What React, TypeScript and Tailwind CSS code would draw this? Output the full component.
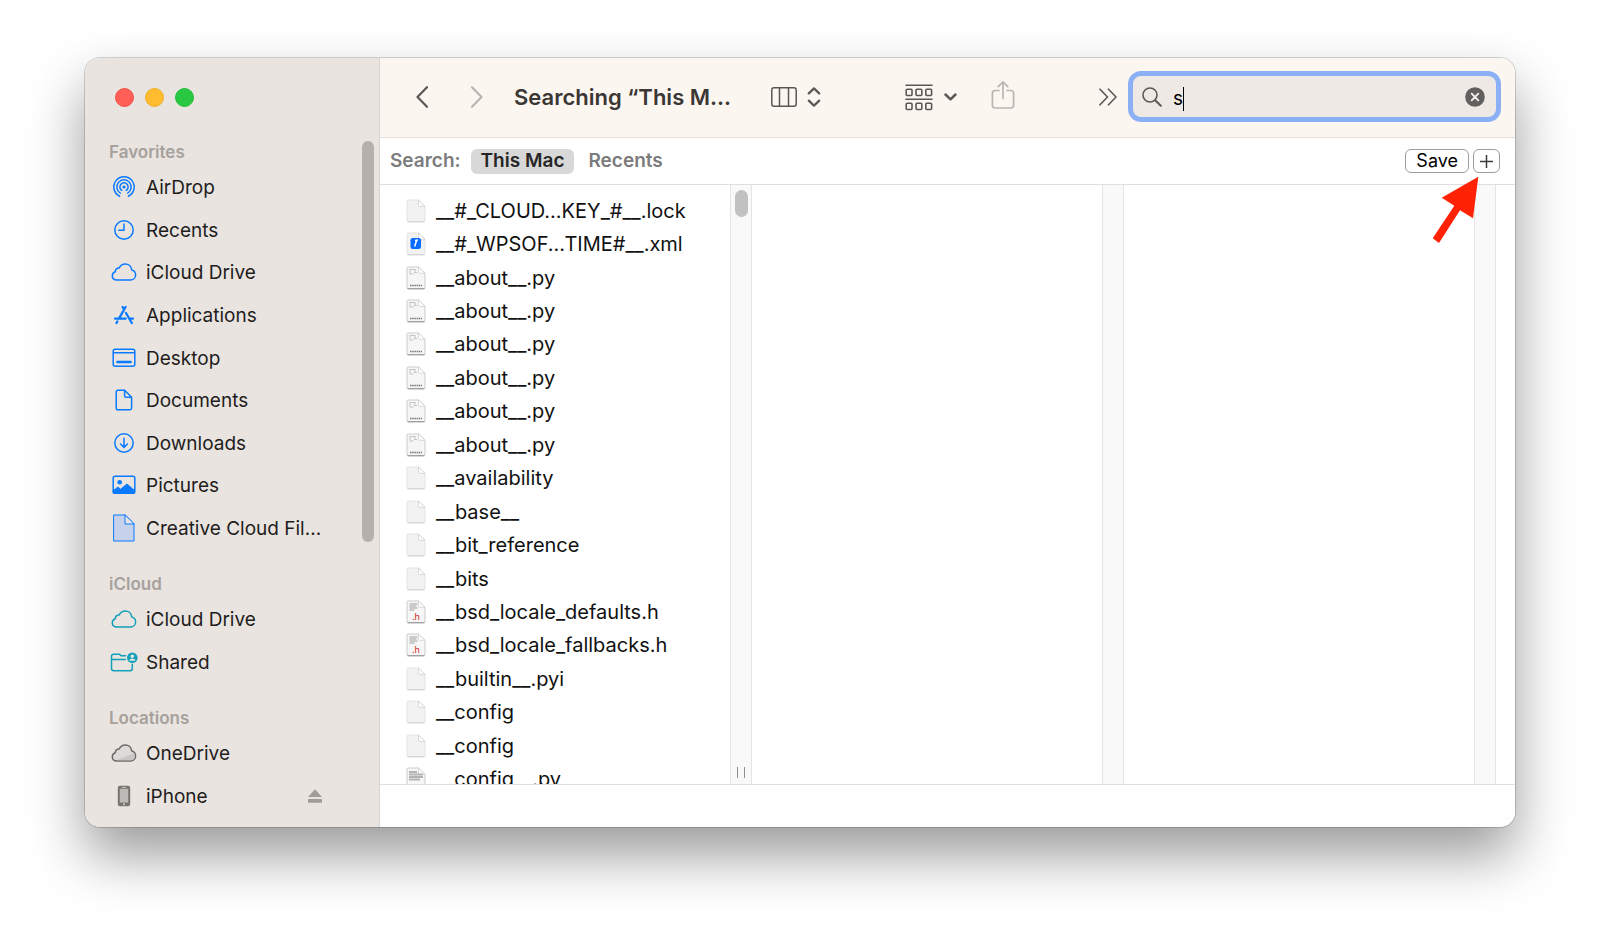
import { useState } from "react";
import type { ReactNode } from "react";

const strokeProps = {
  fill: "none",
  stroke: "currentColor",
  strokeLinecap: "round" as const,
  strokeLinejoin: "round" as const,
};

const AirDropIcon = () => (
  <svg width="24" height="24" viewBox="0 0 24 24" strokeWidth="1.5" {...strokeProps}>
    <circle cx="12" cy="12" r="1.6" fill="currentColor" stroke="none" />
    <path d="M9.8 15.4a4.1 4.1 0 1 1 4.4 0" />
    <path d="M8.3 18.2a7.2 7.2 0 1 1 7.4 0" />
    <path d="M7.6 21.2a10.2 10.2 0 1 1 8.8 0" />
  </svg>
);

const RecentsIcon = () => (
  <svg width="22" height="22" viewBox="0 0 22 22" strokeWidth="1.5" {...strokeProps}>
    <circle cx="11" cy="11" r="9.2" />
    <path d="M11 5v6.3H5.8" />
  </svg>
);

const CloudIcon = ({ filled = false }: { filled?: boolean }) => (
  <svg width="26" height="20" viewBox="0 0 26 20" strokeWidth="1.5" {...strokeProps}>
    <path
      d="M6.2 18C3.2 18 1.3 16.2 1.3 13.7c0-2.1 1.2-3.5 3-4C4.2 7.4 6 5.700 8.200 6 9.300 3.500 11.500 1.900 14.200 1.900c3.500 0 6.200 2.500 6.500 6C23 8.600 24.600 10.500 24.600 12.900c0 3-2.200 5.100-5 5.100Z"
      fill={filled ? "#dedad7" : "none"}
    />
    {filled && <path d="M5.500 17.200 22 10.400c1 .6 1.700 1.700 1.600 2.900-.1 2.400-1.700 3.900-4 3.900Z" fill="#c9c6c4" stroke="none" />}
  </svg>
);

const ApplicationsIcon = () => (
  <svg width="22" height="20" viewBox="0 0 22 20" strokeWidth="2.3" {...strokeProps}>
    <path d="M12.600 2 6.300 12.800M9.600 2l1.500 2.600M13 8l5.800 10M2 13.600h10.700M16.800 13.600H20M4.400 16.400 3.500 18" />
  </svg>
);

const DesktopIcon = () => (
  <svg width="24" height="20" viewBox="0 0 24 20" strokeWidth="1.5" {...strokeProps}>
    <rect x="1.2" y="1.2" width="21.6" height="17" rx="2" />
    <path d="M1.500 4.700h21" />
    <path d="M5.500 14h13" strokeWidth="2.6" />
  </svg>
);

const DocumentIcon = () => (
  <svg width="18" height="22" viewBox="0 0 18 22" strokeWidth="1.5" {...strokeProps}>
    <path d="M3 1.200h6.600l7 7V19a1.800 1.800 0 0 1-1.800 1.800H3A1.800 1.800 0 0 1 1.200 19V3A1.800 1.800 0 0 1 3 1.200Z" />
    <path d="M9.600 1.400v5.300c0 1 .5 1.500 1.500 1.500h5.300" />
  </svg>
);

const DownloadsIcon = () => (
  <svg width="22" height="22" viewBox="0 0 22 22" strokeWidth="1.5" {...strokeProps}>
    <circle cx="11" cy="11" r="9.2" />
    <path d="M11 6.200v9M7.600 12l3.400 3.400 3.400-3.400" />
  </svg>
);

const PicturesIcon = () => (
  <svg width="24" height="20" viewBox="0 0 24 20" strokeWidth="1.5" {...strokeProps}>
    <rect x="1.2" y="1.2" width="21.6" height="17" rx="1.8" />
    <circle cx="7.7" cy="7.3" r="2.3" fill="currentColor" stroke="none" />
    <path d="M1.500 15.500 6 12l2.500 2.300L15 9l7.500 6.500v2.500h-21Z" fill="currentColor" strokeWidth="1" />
  </svg>
);

const CreativeCloudIcon = () => (
  <svg width="22" height="28" viewBox="0 0 22 28" strokeWidth="1" {...strokeProps}>
    <path d="M1 1h11l9 9v17H1Z" fill="#c6d2ec" />
    <path d="M12 1v9h9Z" fill="#e9e4e0" />
  </svg>
);

const SharedIcon = () => (
  <svg width="28" height="20" viewBox="0 0 28 20" strokeWidth="1.5" {...strokeProps}>
    <path d="M15.500 3.800H11L9.500 2.200H3.800c-1.500 0-2.300.7-2.300 2.200v12.200c0 1.400.8 2.200 2.200 2.200h16.400c1.400 0 2.200-.8 2.200-2.200V12.200M1.800 7.600h13.500" />
    <circle cx="22.3" cy="5.7" r="5.3" fill="currentColor" stroke="none" />
    <circle cx="22.3" cy="4.2" r="1.7" fill="#e9e4e0" stroke="none" />
    <path d="M19.200 8.700c.4-3 5.800-3 6.200 0Z" fill="#e9e4e0" stroke="none" />
  </svg>
);

const PhoneIcon = () => (
  <svg width="14" height="22" viewBox="0 0 14 22">
    <rect x="0.8" y="0.8" width="12.4" height="20.4" rx="2.2" fill="#777371" />
    <rect x="2.8" y="3.8" width="8.4" height="13.8" fill="#bdb9b6" />
    <rect x="4.8" y="2" width="4.4" height="0.9" fill="#c9c5c2" />
    <circle cx="7" cy="19.3" r="1" fill="#d5d1ce" />
  </svg>
);

type Place = { label: string; icon: ReactNode; ejectable?: boolean };
type PlaceGroup = { heading: string; tint: string; height: string; places: Place[] };

const groups: PlaceGroup[] = [
  {
    heading: "Favorites",
    tint: "text-[#0a7aff]",
    height: "h-[383px]",
    places: [
      { label: "AirDrop", icon: <AirDropIcon /> },
      { label: "Recents", icon: <RecentsIcon /> },
      { label: "iCloud Drive", icon: <CloudIcon /> },
      { label: "Applications", icon: <ApplicationsIcon /> },
      { label: "Desktop", icon: <DesktopIcon /> },
      { label: "Documents", icon: <DocumentIcon /> },
      { label: "Downloads", icon: <DownloadsIcon /> },
      { label: "Pictures", icon: <PicturesIcon /> },
      { label: "Creative Cloud Fil...", icon: <CreativeCloudIcon /> },
    ],
  },
  {
    heading: "iCloud",
    tint: "text-[#12a0b8]",
    height: "h-[85px]",
    places: [
      { label: "iCloud Drive", icon: <CloudIcon /> },
      { label: "Shared", icon: <SharedIcon /> },
    ],
  },
  {
    heading: "Locations",
    tint: "text-[#6d6a69]",
    height: "h-[85px]",
    places: [
      { label: "OneDrive", icon: <CloudIcon filled /> },
      { label: "iPhone", icon: <PhoneIcon />, ejectable: true },
    ],
  },
];

type FileKind = "blank" | "xml" | "py" | "h" | "text";

const files: { name: string; kind: FileKind }[] = [
  { name: "__#_CLOUD...KEY_#__.lock", kind: "blank" },
  { name: "__#_WPSOF...TIME#__.xml", kind: "xml" },
  { name: "__about__.py", kind: "py" },
  { name: "__about__.py", kind: "py" },
  { name: "__about__.py", kind: "py" },
  { name: "__about__.py", kind: "py" },
  { name: "__about__.py", kind: "py" },
  { name: "__about__.py", kind: "py" },
  { name: "__availability", kind: "blank" },
  { name: "__base__", kind: "blank" },
  { name: "__bit_reference", kind: "blank" },
  { name: "__bits", kind: "blank" },
  { name: "__bsd_locale_defaults.h", kind: "h" },
  { name: "__bsd_locale_fallbacks.h", kind: "h" },
  { name: "__builtin__.pyi", kind: "blank" },
  { name: "__config", kind: "blank" },
  { name: "__config", kind: "blank" },
  { name: "__config__.py", kind: "text" },
];

const FileIcon = ({ kind }: { kind: FileKind }) => {
  const plain = kind === "blank" || kind === "xml";
  return (
    <svg width="20" height="24" viewBox="0 0 20 24" className="shrink-0" aria-hidden="true">
      <path d="M2 1h10.500L19 7.300V21.700a1 1 0 0 1-1 1H2a1 1 0 0 1-1-1V2a1 1 0 0 1 1-1Z" fill={plain ? "#f2f2f2" : "#f6f6f6"} stroke={plain ? "#e4e4e4" : "#cccccc"} />
      <path d="M1.500 22.800h17" stroke={plain ? "#d0d0d0" : "#8f8f8f"} />
      <path d="M12.500 1v5.300a1 1 0 0 0 1 1H19Z" fill="#ffffff" stroke="#cfcfcf" strokeWidth="0.8" />
      {kind === "xml" && (
        <>
          <rect x="4.500" y="6" width="10.500" height="11" rx="2.200" fill="#0a6cff" />
          <path d="M10.800 8 8.600 14.600M9 8.600l3-.5" stroke="#ffffff" strokeWidth="1.500" fill="none" />
        </>
      )}
      {kind === "py" && (
        <>
          <path d="M3.500 3.500h6M4 3.500v4M9 3.500v3M3.500 8h4M8 6.500h3" stroke="#c4c4c4" />
          <path d="M4 19.500h12" stroke="#777777" strokeWidth="1.600" strokeDasharray="1.500 0.700" />
        </>
      )}
      {kind === "h" && (
        <>
          <path d="M3.500 4h8M3.500 6h7M3.500 8h8M3.500 10h5" stroke="#bdbdbd" strokeWidth="1.300" />
          <text x="6" y="20" fontSize="9" fill="#cf1f1f" fontFamily="Inter, sans-serif">.h</text>
        </>
      )}
      {kind === "text" && <path d="M3 5h8M3 7.500h14M3 10h14M3 12.500h11" stroke="#b3b3b3" strokeWidth="1.900" />}
    </svg>
  );
};

const Sidebar = () => (
  <aside className="relative w-[295px] shrink-0 border-r border-[#d9d4d0] bg-[#e9e4e0]">
    <div className="flex gap-[11px] pt-[30px] pl-[30px]">
      <button type="button" aria-label="Close" className="size-[19px] rounded-full border border-[#f04e43] bg-[#ff5f57]" />
      <button type="button" aria-label="Minimize" className="size-[19px] rounded-full border border-[#f3ae2a] bg-[#febc2e]" />
      <button type="button" aria-label="Zoom" className="size-[19px] rounded-full border border-[#23bd39] bg-[#28c840]" />
    </div>
    <nav aria-label="Places" className="mt-[31px] flex flex-col gap-[21px] pr-[56px] pl-6">
      {groups.map((g) => (
        <section key={g.heading}>
          <h2 className="flex h-7 items-center text-[17px] leading-6 font-semibold text-[#a6a19d]">{g.heading}</h2>
          <ul className={`flex flex-col ${g.height}`}>
            {g.places.map((p) => (
              <li key={p.label} className="flex flex-1 items-center">
                <a href="#" className="flex items-center gap-[7px] text-[19px] leading-6 whitespace-nowrap text-[#1f1d1c]">
                  <span className={`flex w-[30px] justify-center ${g.tint}`}>{p.icon}</span>
                  <span className="pt-0.5">{p.label}</span>
                </a>
                {p.ejectable && (
                  <button type="button" aria-label={`Eject ${p.label}`} className="ml-auto text-[#a19c98]">
                    <svg width="16" height="16" viewBox="0 0 16 16" fill="currentColor">
                      <path d="M8 1.200 15 9H1Z" />
                      <rect x="1" y="11" width="14" height="3.8" rx="0.6" />
                    </svg>
                  </button>
                )}
              </li>
            ))}
          </ul>
        </section>
      ))}
    </nav>
    <div className="absolute top-[83px] right-[5px] h-[401px] w-3 rounded-full bg-[#b5b0ac]" />
  </aside>
);

const Toolbar = () => {
  const [query, setQuery] = useState("s");

  return (
    <header className="flex h-20 shrink-0 items-center border-b border-[#e3deda] bg-[#fcf6f0] pr-[14px] pb-0.5 pl-9 text-[#5a5755]">
      <button type="button" aria-label="Back">
        <svg width="12" height="22" viewBox="0 0 12 22" strokeWidth="2.2" {...strokeProps}>
          <path d="M11 1.200 1.500 11 11 20.800" />
        </svg>
      </button>
      <button type="button" aria-label="Forward" className="ml-[43px] text-[#b9b5b1]">
        <svg width="12" height="22" viewBox="0 0 12 22" strokeWidth="2.2" {...strokeProps}>
          <path d="m1 1.200 9.500 9.800L1 20.800" />
        </svg>
      </button>
      <h1 className="ml-[31px] text-[22px] leading-8 font-semibold whitespace-nowrap text-[#3a3735]">Searching “This M...</h1>
      <button type="button" aria-label="View as columns" className="ml-auto flex items-center gap-[10px]">
        <svg width="26" height="20" viewBox="0 0 26 20" strokeWidth="1.5" {...strokeProps}>
          <rect x="0.8" y="0.8" width="24.4" height="18.4" rx="2.2" />
          <path d="M8.500 1v18M17.500 1v18" />
        </svg>
        <svg width="14" height="20" viewBox="0 0 14 20" strokeWidth="2.2" {...strokeProps}>
          <path d="m1.800 6.400 5.200-5 5.200 5M1.800 13.600l5.200 5 5.200-5" />
        </svg>
      </button>
      <button type="button" aria-label="Group items" className="ml-[84px] flex items-center gap-[11px]">
        <svg width="28" height="28" viewBox="0 0 28 28" strokeWidth="1.6" {...strokeProps}>
          <path d="M1 2.200h26M1 16.200h26" />
          <rect x="1.2" y="6.3" width="5.8" height="6.2" rx="1" />
          <rect x="11" y="6.3" width="5.8" height="6.2" rx="1" />
          <rect x="20.8" y="6.3" width="5.8" height="6.2" rx="1" />
          <rect x="1.2" y="20.3" width="5.8" height="6.2" rx="1" />
          <rect x="11" y="20.3" width="5.8" height="6.2" rx="1" />
          <rect x="20.8" y="20.3" width="5.8" height="6.2" rx="1" />
        </svg>
        <svg width="13" height="8" viewBox="0 0 13 8" strokeWidth="2.5" {...strokeProps}>
          <path d="m1.500 1.500 5 4.800 5-4.800" />
        </svg>
      </button>
      <button type="button" aria-label="Share" className="mb-1 ml-[34px] text-[#b9b5b1]">
        <svg width="24" height="30" viewBox="0 0 24 30" strokeWidth="1.7" {...strokeProps}>
          <path d="M8 10.500H4.200A2.800 2.800 0 0 0 1.400 13.300v12A2.800 2.800 0 0 0 4.200 28h15.600a2.800 2.800 0 0 0 2.800-2.700v-12a2.800 2.800 0 0 0-2.800-2.800H16M12 18.500V2M7.200 6.600 12 1.800l4.800 4.800" />
        </svg>
      </button>
      <button type="button" aria-label="More toolbar items" className="ml-[84px]">
        <svg width="18" height="18" viewBox="0 0 18 18" strokeWidth="1.6" {...strokeProps}>
          <path d="m1 1.200 7.500 7.800L1 16.800M9.500 1.200 17 9l-7.500 7.800" />
        </svg>
      </button>
      <div className="ml-[11px] flex h-[51px] w-[373px] items-center rounded-[13px] border-5 border-[#8cb0f6] bg-[#eee9e5] pr-[11px] pl-[9px]">
        <label className="flex flex-1 cursor-text items-center">
          <svg width="20" height="20" viewBox="0 0 20 20" strokeWidth="1.6" {...strokeProps} aria-hidden="true">
            <circle cx="8" cy="8" r="7" />
            <path d="m13.200 13.200 5.600 5.600" strokeWidth="2" />
          </svg>
          <input
            type="text"
            aria-label="Search"
            value={query}
            onChange={(e) => setQuery(e.target.value)}
            className="ml-[11px] field-sizing-content h-8 bg-transparent pt-1 text-[19px] leading-6 text-black caret-transparent outline-none"
          />
          <span className="mt-1 h-6 w-px bg-black" />
        </label>
        <button type="button" aria-label="Clear search" onClick={() => setQuery("")}>
          <svg width="20" height="20" viewBox="0 0 20 20">
            <circle cx="10" cy="10" r="9.8" fill="#62605e" />
            <path d="m6.700 6.700 6.600 6.600M13.300 6.700l-6.600 6.600" stroke="#f3eeea" strokeWidth="1.9" strokeLinecap="round" />
          </svg>
        </button>
      </div>
    </header>
  );
};

const ScopeBar = () => (
  <div className="flex h-[47px] shrink-0 items-center border-b border-[#dfdfdf] pr-[15px] pl-[10px] text-[19px] leading-6 font-semibold text-[#7c7c7c]">
    <span>Search:</span>
    <button type="button" className="ml-[10px] h-[25px] rounded-md bg-[#d8d8d8] px-[10px] text-[#262626]">This Mac</button>
    <button type="button" className="ml-[14px]">Recents</button>
    <div className="relative ml-auto flex gap-1 text-[18px] font-normal text-black">
      <button type="button" className="h-6 rounded-md border border-[#9e9e9e] bg-white px-[10px] leading-[22px]">Save</button>
      <button type="button" aria-label="Add search criteria" className="flex h-6 w-[27px] items-center justify-center rounded-md border border-[#9e9e9e] bg-white">
        <svg width="15" height="15" viewBox="0 0 15 15" stroke="#3c3c3c" strokeWidth="1.5">
          <path d="M7.500 1v13M1 7.500h13" />
        </svg>
      </button>
      <svg width="48" height="68" viewBox="0 0 48 68" className="pointer-events-none absolute top-[27px] right-5 z-10" aria-hidden="true">
        <path d="M46.300 0.700 9.700 21.700l12.600 8L0.700 62.300 7 67l21-32.700 13 8Z" fill="#ff2204" />
      </svg>
    </div>
  </div>
);

const Column = ({ children, thumb = false }: { children?: ReactNode; thumb?: boolean }) => (
  <div className="flex min-w-0 flex-1">
    <div className="min-w-0 flex-1 overflow-hidden">{children}</div>
    <div className="flex w-[22px] shrink-0 flex-col items-center justify-between border-x border-[#e4e4e4] bg-[#f9f9f9] pt-[5px] pb-[6px]">
      {thumb && (
        <>
          <div className="h-[27px] w-[13px] rounded-full bg-[#c1c1c1]" />
          <div className="flex h-[11px] w-2 justify-between border-x border-[#8e8e8e]" />
        </>
      )}
    </div>
  </div>
);

const App = () => (
  <main className="flex h-screen bg-white px-[85px] pt-[58px] pb-[112px] font-['Inter','Liberation_Sans',sans-serif]">
    <div className="flex min-w-0 flex-1 overflow-hidden rounded-[15px] bg-white shadow-[0_0_0_1px_rgba(0,0,0,0.16),0_28px_56px_rgba(0,0,0,0.4)]">
      <Sidebar />
      <div className="flex min-w-0 flex-1 flex-col">
        <Toolbar />
        <ScopeBar />
        <div className="flex min-h-0 flex-1">
          <Column thumb>
            <ul className="mt-[9px] flex h-[602px] flex-col pl-[26px]">
              {files.map((f, i) => (
                <li key={i} className="flex flex-1 items-center gap-[10px] text-[20px] leading-6 whitespace-nowrap text-[#111111]">
                  <FileIcon kind={f.kind} />
                  {f.name}
                </li>
              ))}
            </ul>
          </Column>
          <Column />
          <Column />
          <div className="w-[19px] shrink-0" />
        </div>
        <footer className="h-[43px] shrink-0 border-t border-[#dfdfdf] bg-[#fefefe]" />
      </div>
    </div>
  </main>
);

export default App;
